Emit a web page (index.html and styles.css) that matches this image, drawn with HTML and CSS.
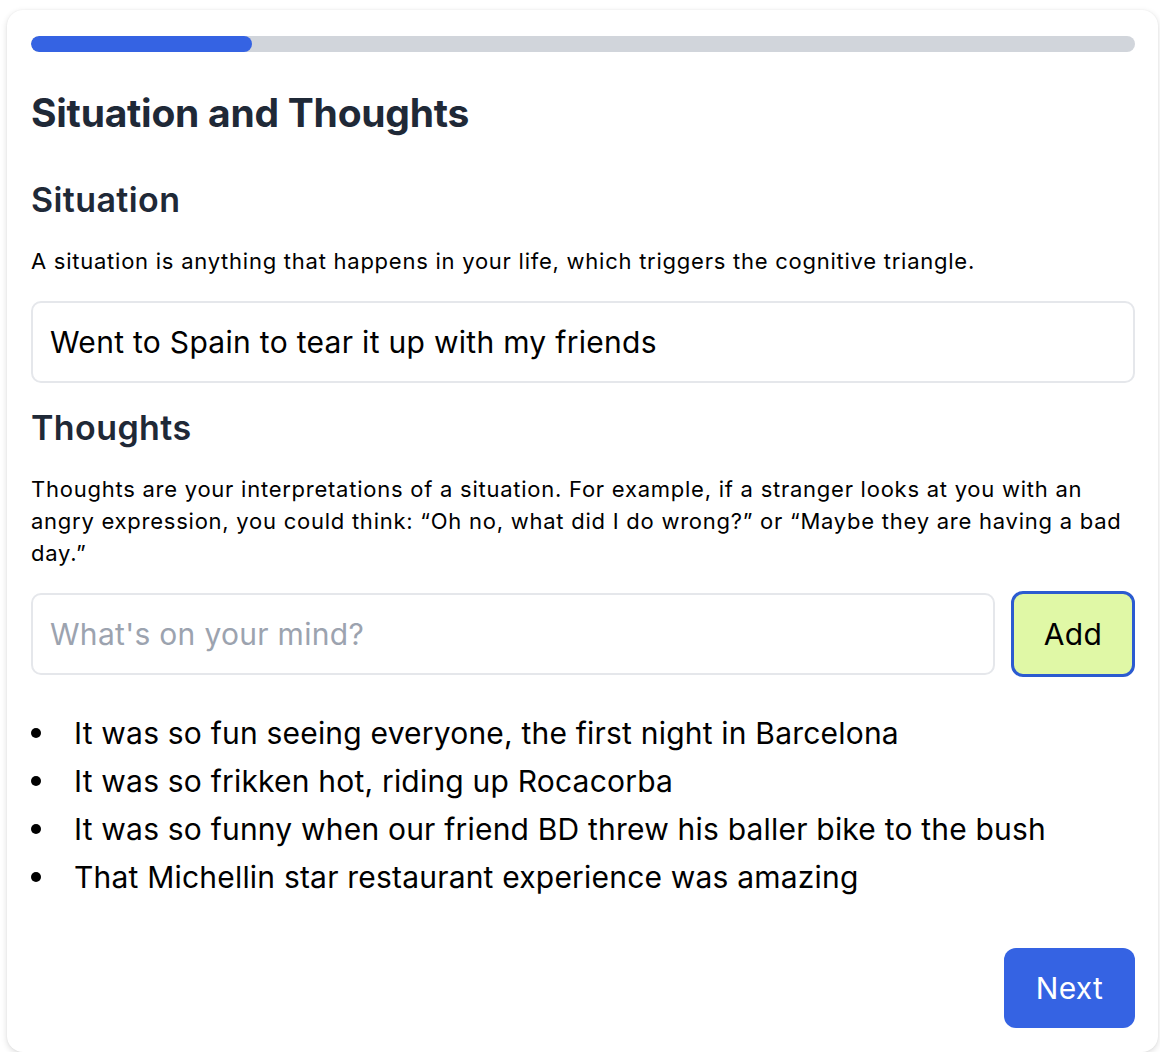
FILE: index.html
```html
<!DOCTYPE html>
<html lang="en">
<head>
<meta charset="utf-8">
<title>Situation and Thoughts</title>
<link rel="stylesheet" href="styles.css">
</head>
<body>
<div class="card">
  <div class="progress"><div class="progress-fill" style="width:20%"></div></div>
  <h1 class="title">Situation and Thoughts</h1>
  <h2 class="section-title">Situation</h2>
  <p class="desc">A situation is anything that happens in your life, which triggers the cognitive triangle.</p>
  <div class="field field-full">Went to Spain to tear it up with my friends</div>
  <h2 class="section-title">Thoughts</h2>
  <p class="desc">Thoughts are your interpretations of a situation. For example, if a stranger looks at you with an angry expression, you could think: “Oh no, what did I do wrong?” or “Maybe they are having a bad day.”</p>
  <div class="add-row">
    <div class="field field-grow placeholder">What's on your mind?</div>
    <button class="add-btn">Add</button>
  </div>
  <ul class="thoughts">
    <li>It was so fun seeing everyone, the first night in Barcelona</li>
    <li>It was so frikken hot, riding up Rocacorba</li>
    <li>It was so funny when our friend BD threw his baller bike to the bush</li>
    <li>That Michellin star restaurant experience was amazing</li>
  </ul>
  <div class="footer"><button class="next-btn">Next</button></div>
</div>
</body>
</html>
```
FILE: styles.css
```css
* { box-sizing: border-box; }
html, body { margin: 0; padding: 0; background: #ffffff; }
body {
  font-family: Inter, "Noto Sans", sans-serif;
  color: #000;
  padding: 10px 2px 0 7px;
}
.card {
  background: #fff;
  border-radius: 16px;
  box-shadow: 0 2px 6px rgba(0,0,0,0.14), 0 0 2px rgba(0,0,0,0.05);
  padding: 26px 23px 24px 24px;
  height: 1042px;
  display: flex;
  flex-direction: column;
}
.progress {
  height: 16px;
  border-radius: 8px;
  background: #d1d5db;
  overflow: hidden;
  flex-shrink: 0;
}
.progress-fill {
  height: 100%;
  background: #3563e3;
  border-radius: 8px;
}
.title {
  margin: 37px 0 0 0;
  font-size: 39px;
  line-height: 48px;
  font-weight: 700;
  letter-spacing: -0.25px;
  color: #1f2937;
}
.section-title {
  margin: 43px 0 0 0;
  font-size: 34px;
  line-height: 40px;
  font-weight: 600;
  color: #1f2937;
  letter-spacing: 0.4px;
}
.field-full + .section-title { margin-top: 25px; }
.desc {
  margin: 25px 0 0 0;
  font-size: 22px;
  line-height: 32px;
  letter-spacing: 0.75px;
  color: #000;
}
.field {
  border: 2px solid #e5e7eb;
  border-radius: 10px;
  height: 82px;
  display: flex;
  align-items: center;
  padding: 0 17px;
  font-size: 30px;
  letter-spacing: 0.3px;
  color: #000;
  flex-shrink: 0;
}
.field-full { margin-top: 24px; }
.add-row {
  display: flex;
  gap: 16px;
  align-items: center;
  margin-top: 22px;
}
.field-grow { flex: 1; }
.placeholder { color: #9ca3af; }
.add-btn {
  width: 124px;
  height: 86px;
  border: 3px solid #2b5bd0;
  border-radius: 12px;
  background: #e0f8a6;
  font-family: Inter, "Noto Sans", sans-serif;
  font-size: 30px;
  letter-spacing: 0.3px;
  color: #000;
  flex-shrink: 0;
}
.thoughts {
  margin: 32px 0 0 0;
  padding: 0;
  list-style: none;
  font-size: 30px;
  line-height: 48px;
  letter-spacing: 0.2px;
}
.thoughts li {
  display: flex;
  align-items: center;
}
.thoughts li::before {
  content: "";
  width: 10px;
  height: 10px;
  border-radius: 50%;
  background: #000;
  margin-right: 33px;
  flex-shrink: 0;
}
.footer {
  margin-top: auto;
  display: flex;
  justify-content: flex-end;
}
.next-btn {
  width: 131px;
  height: 80px;
  border: none;
  border-radius: 12px;
  background: #3563e3;
  color: #fff;
  font-family: Inter, "Noto Sans", sans-serif;
  font-size: 30px;
  letter-spacing: 0.3px;
}
```
